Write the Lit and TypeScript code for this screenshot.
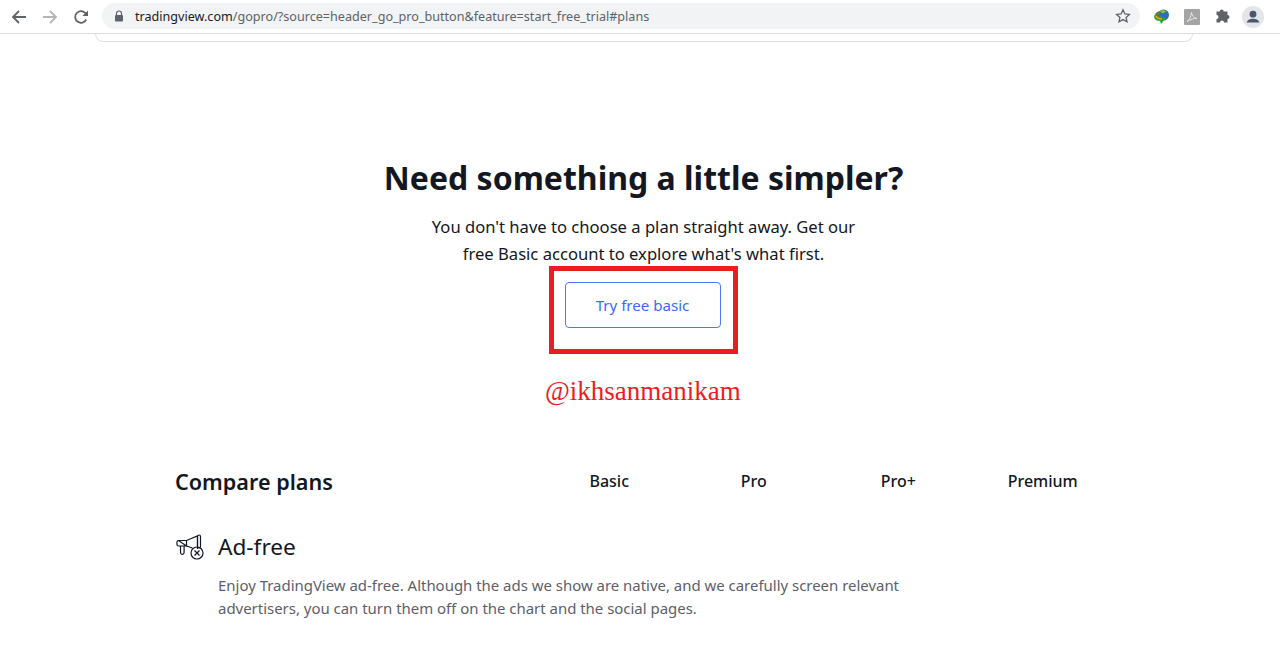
import { LitElement, html, css } from "lit";
import { customElement } from "lit/decorators.js";

@customElement("app-root")
export class AppRoot extends LitElement {
  static styles = css`
    :host { display: block; width: 1280px; height: 653px; overflow: hidden; background: #fff; position: relative; font-family: "Noto Sans", sans-serif; color: #131722; }
    .bar { height: 33px; border-bottom: 1px solid #dadce0; display: flex; align-items: center; box-sizing: content-box; }
    .nav { display: flex; align-items: center; gap: 15px; padding-left: 11px; width: 102px; box-sizing: border-box; }
    .nav svg { display: block; flex: none; }
    .omni { width: 1038px; height: 26px; border-radius: 13px; background: #f1f3f4; display: flex; align-items: center; padding: 0 9px 0 12px; box-sizing: border-box; margin-top: -1px; }
    .url { font: 12.6px "Noto Sans", sans-serif; color: #5f6368; margin-left: 11px; flex: 1; white-space: nowrap; }
    .url b { font-weight: 400; color: #202124; }
    .exts { display: flex; align-items: center; margin-left: 12px; }
    .exts svg { display: block; flex: none; }
    .e1 { margin-right: 12px; }
    .e2 { margin-right: 14px; }
    .e3 { margin-right: 11px; }
    .remnant { height: 8px; margin: 0 87px 0 95px; border: 1px solid #e0e3eb; border-top: 0; border-radius: 0 0 9px 9px; box-sizing: border-box; }
    .hero { display: flex; flex-direction: column; align-items: center; padding: 114px 0 0 7px; }
    h1 { margin: 0; font-size: 32px; line-height: 44px; font-weight: 700; }
    p.lead { margin: 13px 0 0; font-size: 16.6px; line-height: 27px; text-align: center; color: #131722; }
    .btn { margin: 15px 2px 0 0; width: 156px; height: 46px; border: 1px solid #4a78ff; border-radius: 4px; color: #3b68ff; background: #fff; font: 15.1px "Noto Sans", sans-serif; display: flex; align-items: center; justify-content: center; box-sizing: border-box; }
    .annot { position: absolute; left: 549px; top: 266px; width: 189px; height: 88px; border: 5px solid #ed1c24; box-sizing: border-box; }
    .tag { position: absolute; left: 545px; top: 374px; color: #ed1c24; font: 27px/34px "Liberation Serif", serif; white-space: nowrap; }
    .compare { display: grid; grid-template-columns: 362px repeat(4, 144.5px); align-items: center; margin: 139px 0 0 175px; }
    .compare h2 { margin: 0; font-size: 21.6px; line-height: 30px; font-weight: 600; }
    .compare span { font-size: 16px; line-height: 24px; text-align: center; font-weight: 500; margin-top: -2px; }
    .feature { margin: 35px 0 0 175px; }
    .ft { display: flex; align-items: center; gap: 13px; }
    .ft svg { display: block; flex: none; }
    .ft h3 { margin: 0; font-size: 22.6px; line-height: 30px; font-weight: 400; }
    .feature p { margin: 12px 0 0 43px; width: 740px; font-size: 14.94px; line-height: 23px; color: #5d606b; }
  `;

  render() {
    return html`
      <div class="bar">
        <div class="nav">
          <svg width="16" height="16" viewBox="0 0 16 16"><path d="M15 8H2.500M8 2L2 8l6 6" fill="none" stroke="#5f6368" stroke-width="1.800"/></svg>
          <svg width="16" height="16" viewBox="0 0 16 16"><path d="M1 8h12.500M8 2l6 6-6 6" fill="none" stroke="#b4b6b9" stroke-width="1.800"/></svg>
          <svg width="16" height="16" viewBox="0 0 16 16"><path d="M13.200 10.500A5.800 5.800 0 1 1 12.200 4L14.500 6.200" fill="none" stroke="#5f6368" stroke-width="1.800"/><path d="M15 1.500V7H9.500z" fill="#5f6368"/></svg>
        </div>
        <div class="omni">
          <svg width="10" height="12" viewBox="0 0 10 12"><path d="M2.500 5V3.500a2.500 2.500 0 0 1 5 0V5" fill="none" stroke="#5f6368" stroke-width="1.200"/><rect x="1" y="5" width="8" height="6.500" rx="1" fill="#5f6368"/></svg>
          <div class="url"><b>tradingview.com</b>/gopro/?source=header_go_pro_button&amp;feature=start_free_trial#plans</div>
          <svg width="16" height="16" viewBox="0 0 16 16"><path d="M8 1.800l1.900 4.100 4.500.5-3.300 3 .9 4.400L8 11.600l-4 2.200.9-4.400-3.300-3 4.500-.5z" fill="none" stroke="#5f6368" stroke-width="1.300"/></svg>
        </div>
        <div class="exts">
          <svg class="e1" width="20" height="20" viewBox="0 0 20 20"><circle cx="11.500" cy="8" r="5.500" fill="#2c6fb5"/><path d="M8 4.500c2-2 5-1.500 6 0l-3 2z" fill="#8fc31f"/><path d="M2 10c1-4 4-6 6-6l-1 4c1 2 4 3 7 3l-5 6-1-3c-3 0-5-1-6-4z" fill="#3a9a3a"/><path d="M4 9c1 2 3 3 6 3" stroke="#f0b400" stroke-width="1.500" fill="none"/><path d="M5 6.500c0 1 1 2 2 2.500" stroke="#d8352a" stroke-width="1.500" fill="none"/></svg>
          <svg class="e2" width="16" height="16" viewBox="0 0 16 16"><rect width="16" height="16" rx="1" fill="#a4a4a4"/><path d="M3 12.500c2-1 4-4.500 4.500-9 .5 3 2 5.500 5.500 6-3-.3-6 .8-10 3z" fill="none" stroke="#e6e6e6" stroke-width="1"/></svg>
          <svg class="e3" width="17" height="17" viewBox="0 0 17 17"><path d="M2 5h3.200a2 2 0 1 1 4 0H13v3.500a2 2 0 1 1 0 4V16H9.500a2 2 0 1 0-4 0H2v-3.500a2 2 0 1 0 0-4z" fill="#5f6368" transform="translate(0.500 -1.500)"/></svg>
          <svg width="22" height="22" viewBox="0 0 22 22"><circle cx="11" cy="11" r="11" fill="#e3e5ea"/><circle cx="11" cy="8.200" r="3.400" fill="#49566c"/><path d="M4.800 16.500c0-2.500 3.500-3.800 6.200-3.800s6.200 1.300 6.200 3.800z" fill="#49566c"/></svg>
        </div>
      </div>
      <div class="remnant"></div>
      <section class="hero">
        <h1>Need something a little simpler?</h1>
        <p class="lead">You don't have to choose a plan straight away. Get our<br>free Basic account to explore what's what first.</p>
        <div class="btn">Try free basic</div>
      </section>
      <div class="compare">
        <h2>Compare plans</h2><span>Basic</span><span>Pro</span><span>Pro+</span><span>Premium</span>
      </div>
      <section class="feature">
        <div class="ft">
          <svg width="30" height="26" viewBox="0 0 30 26" fill="none" stroke="#131722" stroke-width="1.200">
            <path d="M3.500 6.500h8l11-4.500v13"/><path d="M3.500 6.500a1.500 1.500 0 0 0-1.500 1.500v2.500a1.500 1.500 0 0 0 1.500 1.500h8z"/><path d="M11.500 6.500V12"/><path d="M5.500 12v6.500a1.800 1.800 0 0 0 3.600 0V12"/><path d="M11.500 12l6 2"/><rect x="22.500" y="1" width="3" height="13" rx="1.500"/>
            <circle cx="22" cy="19" r="6"/><path d="M19.500 16.500l5 5M24.500 16.500l-5 5"/>
          </svg>
          <h3>Ad-free</h3>
        </div>
        <p>Enjoy TradingView ad-free. Although the ads we show are native, and we carefully screen relevant<br>advertisers, you can turn them off on the chart and the social pages.</p>
      </section>
      <div class="annot"></div>
      <div class="tag">@ikhsanmanikam</div>
    `;
  }
}
